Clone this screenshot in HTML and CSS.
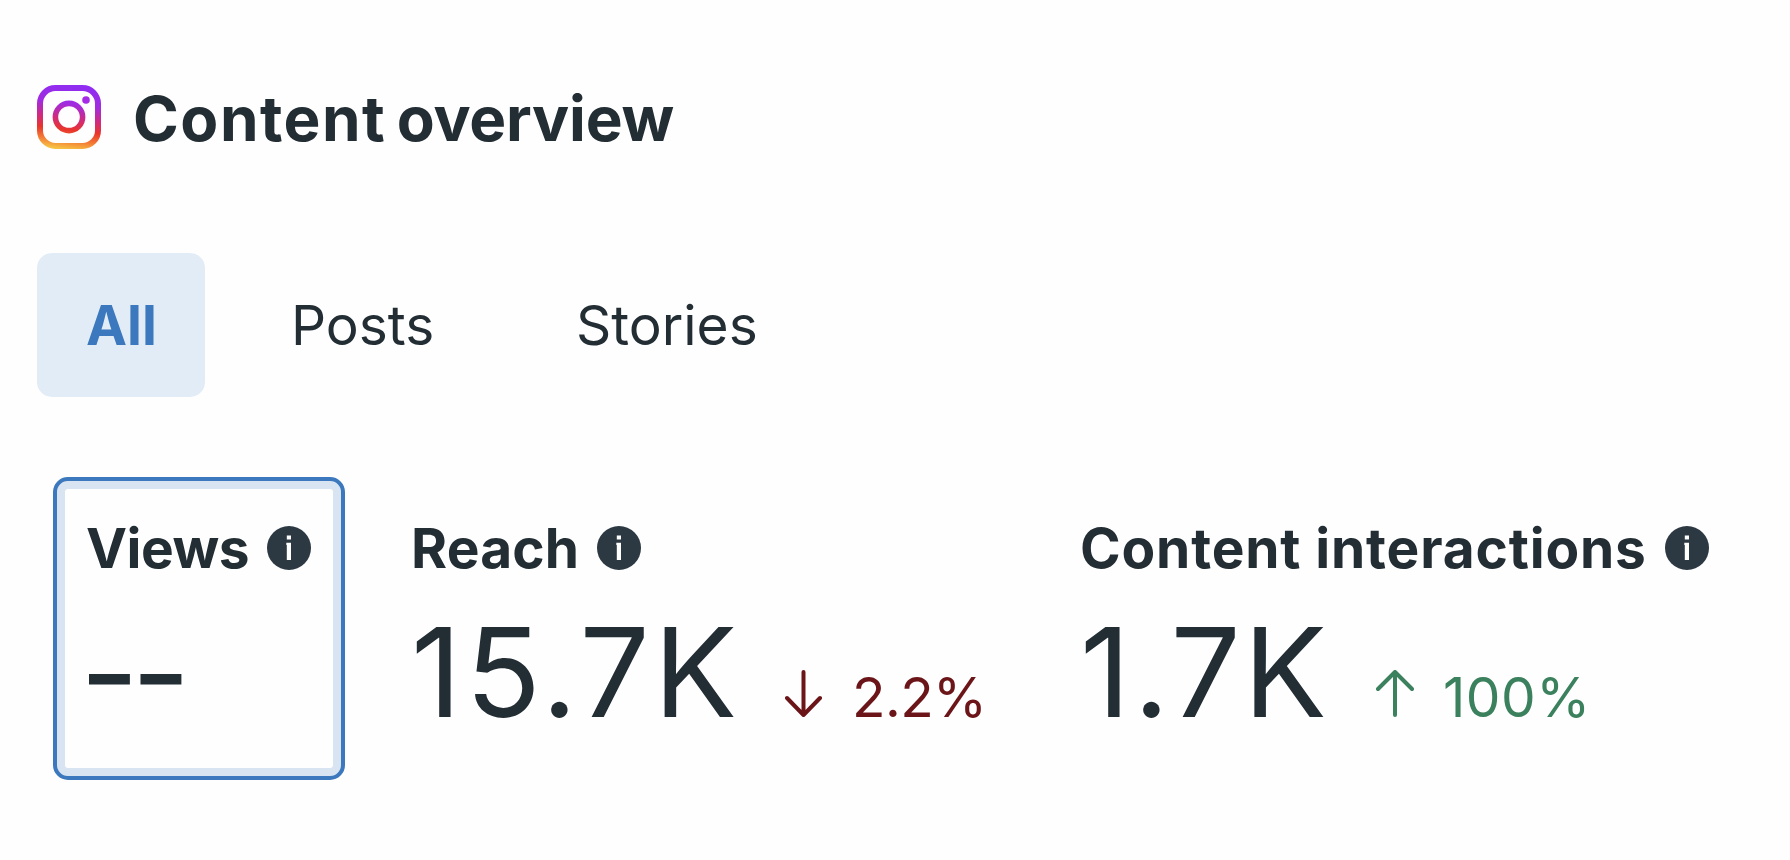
FILE: index.html
```html
<!DOCTYPE html>
<html lang="en">
<head>
  <meta charset="UTF-8" />
  <meta name="viewport" content="width=device-width, initial-scale=1.0"/>
  <title>Content overview</title>
  <link rel="stylesheet" href="styles.css">
</head>
<body>
  <header class="header">
    <svg class="logo" viewBox="0 0 64 64" fill="none">
      <defs>
        <linearGradient id="ring" gradientUnits="userSpaceOnUse" x1="36" y1="0" x2="28" y2="64">
          <stop offset="0" stop-color="#8f2df2"/>
          <stop offset="0.3" stop-color="#a12be0"/>
          <stop offset="0.52" stop-color="#d02a80"/>
          <stop offset="0.7" stop-color="#e8352c"/>
          <stop offset="0.86" stop-color="#f37a35"/>
          <stop offset="1" stop-color="#f6c244"/>
        </linearGradient>
      </defs>
      <rect x="3" y="3" width="58" height="58" rx="15.5" stroke="url(#ring)" stroke-width="6"/>
      <circle cx="32" cy="32" r="13.6" stroke="url(#ring)" stroke-width="5.6"/>
      <circle cx="49" cy="15" r="3.8" fill="#a52be6"/>
    </svg>
    <h1><span class="wide">Content</span> overview</h1>
  </header>

  <nav class="tabs">
    <a class="tab active">All</a>
    <a class="tab posts">Posts</a>
    <a class="tab stories">Stories</a>
  </nav>

  <main class="metrics">
    <section class="metric selected">
      <div class="label">
        <span class="views-label">Views</span>
        <svg class="info" viewBox="0 0 44 44"><circle cx="22" cy="22" r="22"/><path d="M19.8 9.5h4.2v4h-4.2zM19.3 16.8h4.7V34h-4.2V19h-.5z"/></svg>
      </div>
      <div class="empty">--</div>
    </section>

    <section class="metric reach">
      <div class="label">
        <span class="reach-label">Reach</span>
        <svg class="info" viewBox="0 0 44 44"><circle cx="22" cy="22" r="22"/><path d="M19.8 9.5h4.2v4h-4.2zM19.3 16.8h4.7V34h-4.2V19h-.5z"/></svg>
      </div>
      <div class="row">
        <span class="value">15.7K</span>
        <span class="change down">
          <svg class="arrow" viewBox="0 0 38 47"><path d="M18.5 2v42M2 28l16.500 17 16.500-17"/></svg>
          <span class="percent">2.2%</span>
        </span>
      </div>
    </section>

    <section class="metric interactions">
      <div class="label">
        <span class="interactions-label">Content interactions</span>
        <svg class="info" viewBox="0 0 44 44"><circle cx="22" cy="22" r="22"/><path d="M19.8 9.5h4.2v4h-4.2zM19.3 16.8h4.7V34h-4.2V19h-.5z"/></svg>
      </div>
      <div class="row">
        <span class="value">1.7K</span>
        <span class="change up">
          <svg class="arrow" viewBox="0 0 38 47"><path d="M19 45V3M2 19L19 2l17 17"/></svg>
          <span class="percent">100%</span>
        </span>
      </div>
    </section>
  </main>
</body>
</html>
```
FILE: styles.css
```css
* {
  box-sizing: border-box;
}

body {
  margin: 0;
  padding: 80px 37px 0;
  height: 860px;
  overflow: hidden;
  font-family: Inter, sans-serif;
  color: #222d34;
  background: #fefefe;
}

.header {
  display: flex;
  align-items: center;
  gap: 32px;
  height: 74px;
}

.logo {
  width: 64px;
  height: 64px;
}

h1 {
  margin: 0;
  padding-top: 3px;
  font-size: 62px;
  font-weight: 700;
  line-height: 74px;
  letter-spacing: -0.2px;
  word-spacing: -4px;
}

.wide {
  letter-spacing: 1.5px;
}

.tabs {
  display: flex;
  margin-top: 99px;
}

.tab {
  height: 144px;
  padding-left: 49px;
  font-size: 55px;
  line-height: 144px;
}

.active {
  width: 168px;
  border-radius: 15px;
  background: #e2ecf6;
  color: #3b78bd;
  font-weight: 700;
}

.posts {
  width: 322px;
  padding-left: 86px;
}

.metrics {
  display: flex;
  margin-top: 80px;
  padding-left: 16px;
}

.metric {
  height: 303px;
  padding-top: 37px;
}

.selected {
  width: 292px;
  padding: 33px 0 0 29px;
  border: 4px solid #3b78bd;
  border-radius: 15px;
  box-shadow: inset 0 0 0 8px #d9e4f2;
}

.reach {
  width: 669px;
  padding-left: 66px;
}

.interactions {
  padding-left: 66px;
}

.label {
  display: flex;
  align-items: center;
  gap: 18px;
  height: 68px;
  font-size: 55px;
  font-weight: 700;
  white-space: nowrap;
}

.views-label {
  letter-spacing: -0.5px;
}

.reach-label {
  letter-spacing: 0.2px;
}

.interactions-label {
  letter-spacing: 0.85px;
}

.info {
  flex: none;
  width: 44px;
  height: 44px;
  fill: #2c3942;
}

.info path {
  fill: #fff;
}

.empty {
  margin: 16px 0 0 -6px;
  font-size: 128px;
  line-height: 150px;
  letter-spacing: -7.5px;
}

.row {
  display: flex;
  align-items: baseline;
  gap: 44px;
  margin-top: 15px;
}

.value {
  font-size: 124px;
  line-height: 150px;
}

.reach .value {
  letter-spacing: 4px;
}

.interactions .value {
  letter-spacing: 3px;
}

.change {
  display: flex;
  align-items: baseline;
  gap: 29px;
  font-size: 55px;
}

.arrow {
  width: 38px;
  height: 47px;
  fill: none;
  stroke: currentColor;
  stroke-width: 4;
  stroke-linecap: round;
  stroke-linejoin: round;
}

.down {
  color: #6b1519;
}

.down .percent {
  letter-spacing: -0.6px;
}

.up {
  margin-left: 2px;
  color: #3b815d;
}

.up .percent {
  letter-spacing: 0.5px;
}
```
